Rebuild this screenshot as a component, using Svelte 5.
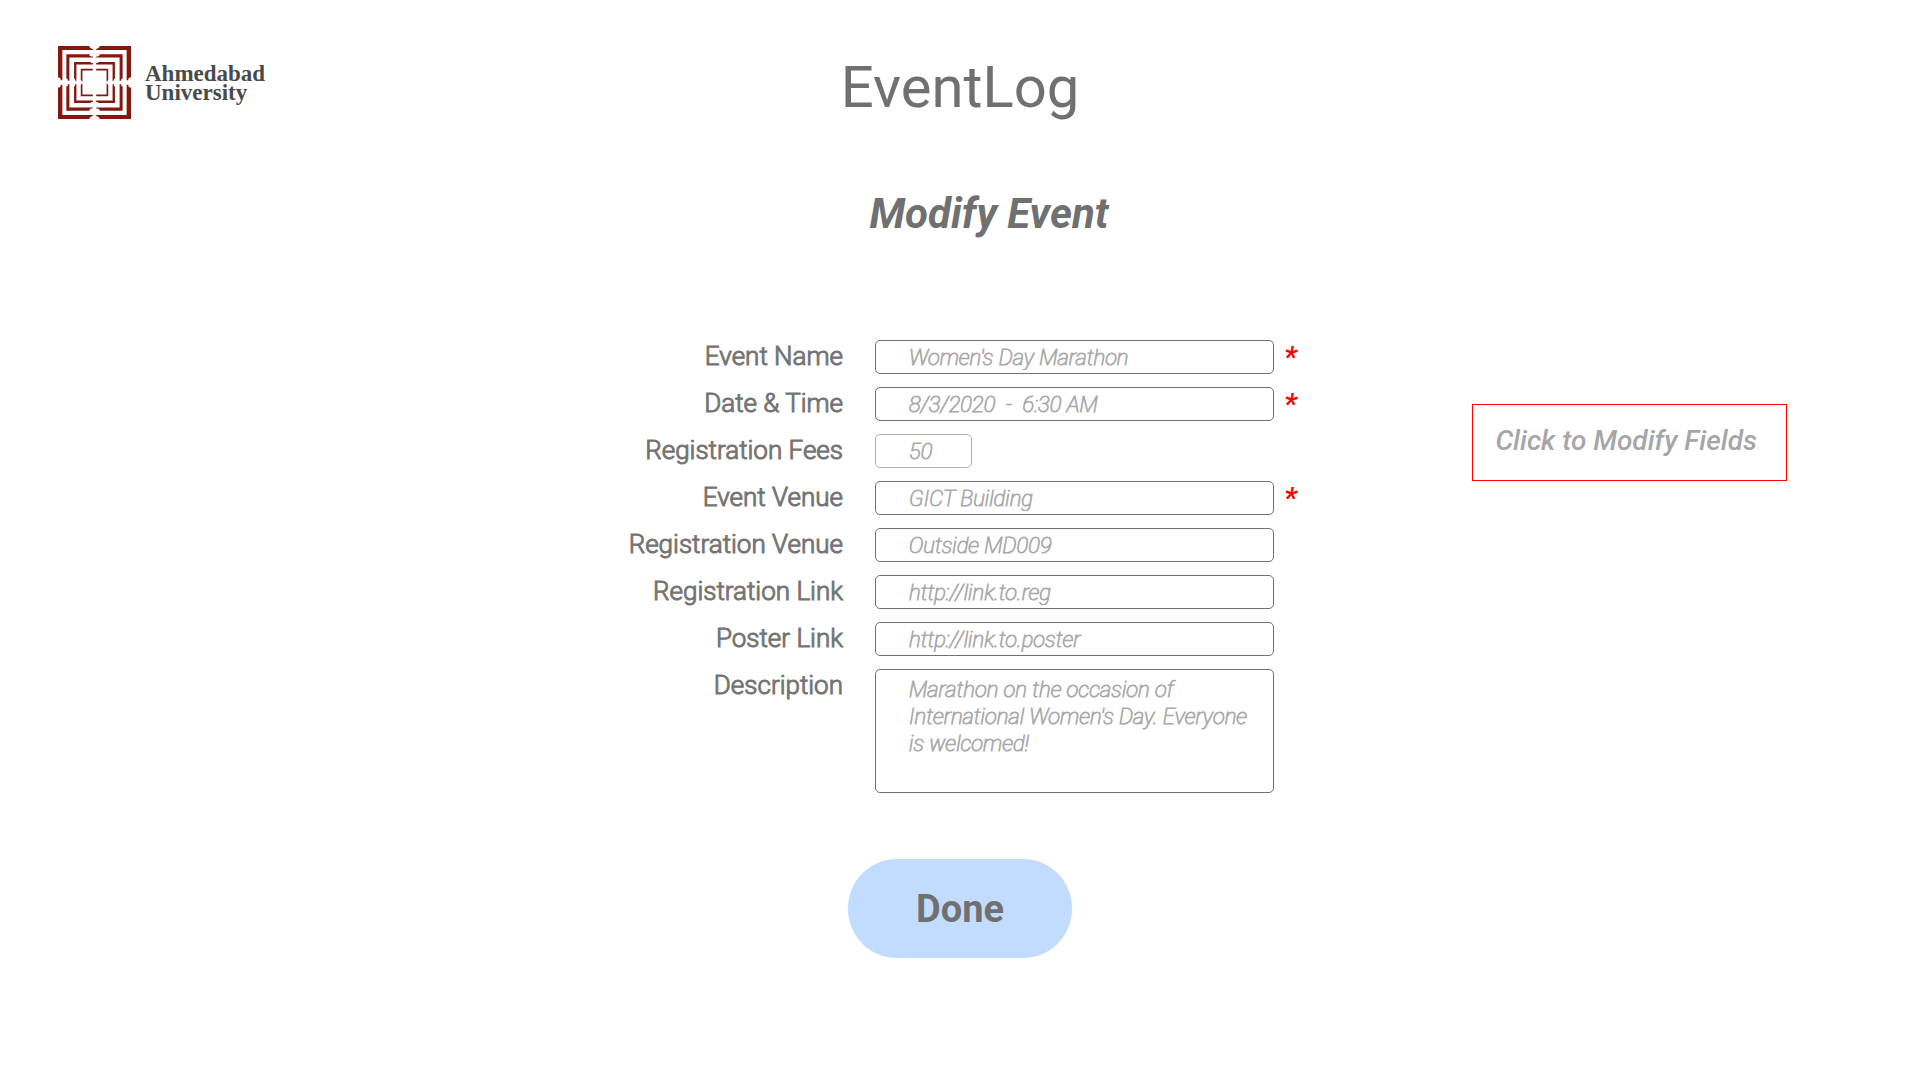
<script>
  const fields = [
    { id: 'event-name', label: 'Event Name', value: "Women's Day Marathon", required: true },
    { id: 'date-time', label: 'Date & Time', value: '8/3/2020  -  6:30 AM', required: true },
    { id: 'fees', label: 'Registration Fees', value: '50', small: true },
    { id: 'event-venue', label: 'Event Venue', value: 'GICT Building', required: true },
    { id: 'registration-venue', label: 'Registration Venue', value: 'Outside MD009' },
    { id: 'registration-link', label: 'Registration Link', value: 'http://link.to.reg' },
    { id: 'poster-link', label: 'Poster Link', value: 'http://link.to.poster' },
  ];
  const description =
    "Marathon on the occasion of International Women's Day. Everyone is welcomed!";
</script>

<div class="page">
  <header>
    <div class="brand">
      <svg class="mark" viewBox="0 0 218 218" aria-hidden="true">
        <defs>
          <g id="quarter">
            <path d="M0 0H94V3L98 7L104 9V12H13V102H8V98L4 94H0Z" />
            <path d="M25 25H94V28L99 31H104V34H34V104H29V98H25Z" />
            <path d="M48 48H98V51H104V55H55V104H51V98H48Z" />
            <path d="M68 68H104V73H73V106H70V102H68Z" />
          </g>
        </defs>
        <use href="#quarter" />
        <use href="#quarter" transform="translate(218 0) scale(-1 1)" />
        <use href="#quarter" transform="translate(0 218) scale(1 -1)" />
        <use href="#quarter" transform="translate(218 218) scale(-1 -1)" />
      </svg>
      <span class="name">Ahmedabad<br />University</span>
    </div>
    <h1>EventLog</h1>
  </header>

  <h2>Modify Event</h2>

  <main>
    <form id="event-form">
      {#each fields as field}
        <label for={field.id}>{field.label}</label>
        <input
          id={field.id}
          class:small={field.small}
          type="text"
          value={field.value}
          required={field.required}
        />
        <span class="star">{field.required ? '*' : ''}</span>
      {/each}
      <label for="description">Description</label>
      <textarea id="description" value={description}></textarea>
    </form>
    <button class="modify" type="button">Click to Modify Fields</button>
  </main>

  <button class="done" type="submit" form="event-form">Done</button>
</div>

<style>
  :global(body) {
    margin: 0;
    background: #fff;
  }
  .page {
    box-sizing: border-box;
    min-height: 100vh;
    display: flex;
    flex-direction: column;
    align-items: stretch;
    font-family: Roboto, sans-serif;
    color: #707070;
  }
  header {
    display: grid;
    grid-template-columns: 1fr auto 1fr;
    align-items: start;
    padding: 46px 58px 0;
  }
  .brand {
    display: flex;
    align-items: center;
    gap: 14px;
  }
  .mark {
    width: 73px;
    height: 73px;
    fill: #831811;
  }
  .name {
    font: bold 23px/19px 'Liberation Serif', serif;
    color: #4a4a4a;
  }
  h1 {
    margin: 7px 0 0;
    font-size: 58px;
    line-height: 68px;
    font-weight: 400;
  }
  h2 {
    margin: 68px 0 0;
    padding-left: 58px;
    font-size: 42px;
    line-height: 50px;
    font-weight: 700;
    font-style: italic;
    text-align: center;
  }
  main {
    display: grid;
    grid-template-columns: 1fr auto 1fr;
    align-items: start;
    margin-top: 101px;
  }
  form {
    grid-column: 2;
    display: grid;
    grid-template-columns: 253px 399px 24px;
    row-gap: 13px;
    align-items: start;
  }
  label {
    padding-right: 32px;
    font-size: 26px;
    line-height: 32px;
    font-weight: 300;
    -webkit-text-stroke: 1px #757575;
    text-align: right;
    white-space: nowrap;
  }
  input,
  textarea {
    box-sizing: border-box;
    width: 100%;
    margin: 0;
    border: 1px solid #707070;
    border-radius: 5px;
    background: #fff;
    font: italic 100 22px/27px Roboto, sans-serif;
    -webkit-text-stroke: 1px #a9a9a9;
    color: #a9a9a9;
    outline: none;
  }
  input {
    height: 34px;
    padding: 0 16px 0 33px;
  }
  .small {
    width: 97px;
    border-color: #b0b0b0;
  }
  textarea {
    grid-column: 2;
    height: 124px;
    padding: 6px 16px 6px 33px;
    resize: none;
    overflow: hidden;
  }
  .star {
    padding-left: 10px;
    font-size: 30px;
    line-height: 34px;
    height: 34px;
    font-weight: 500;
    font-style: italic;
    color: #f00;
  }
  .modify {
    justify-self: end;
    margin: 64px 133px 0 0;
    padding: 20px 29px 23px 22px;
    border: 1px solid #f00;
    background: #fff;
    font: italic 500 28px/32px Roboto, sans-serif;
    color: #a6a6a6;
  }
  .done {
    align-self: center;
    margin-top: 66px;
    padding: 28px 68px 26px;
    border: 0;
    border-radius: 49px;
    background: #c2dcff;
    font: 700 38px/45px Roboto, sans-serif;
    color: #707070;
  }
</style>
